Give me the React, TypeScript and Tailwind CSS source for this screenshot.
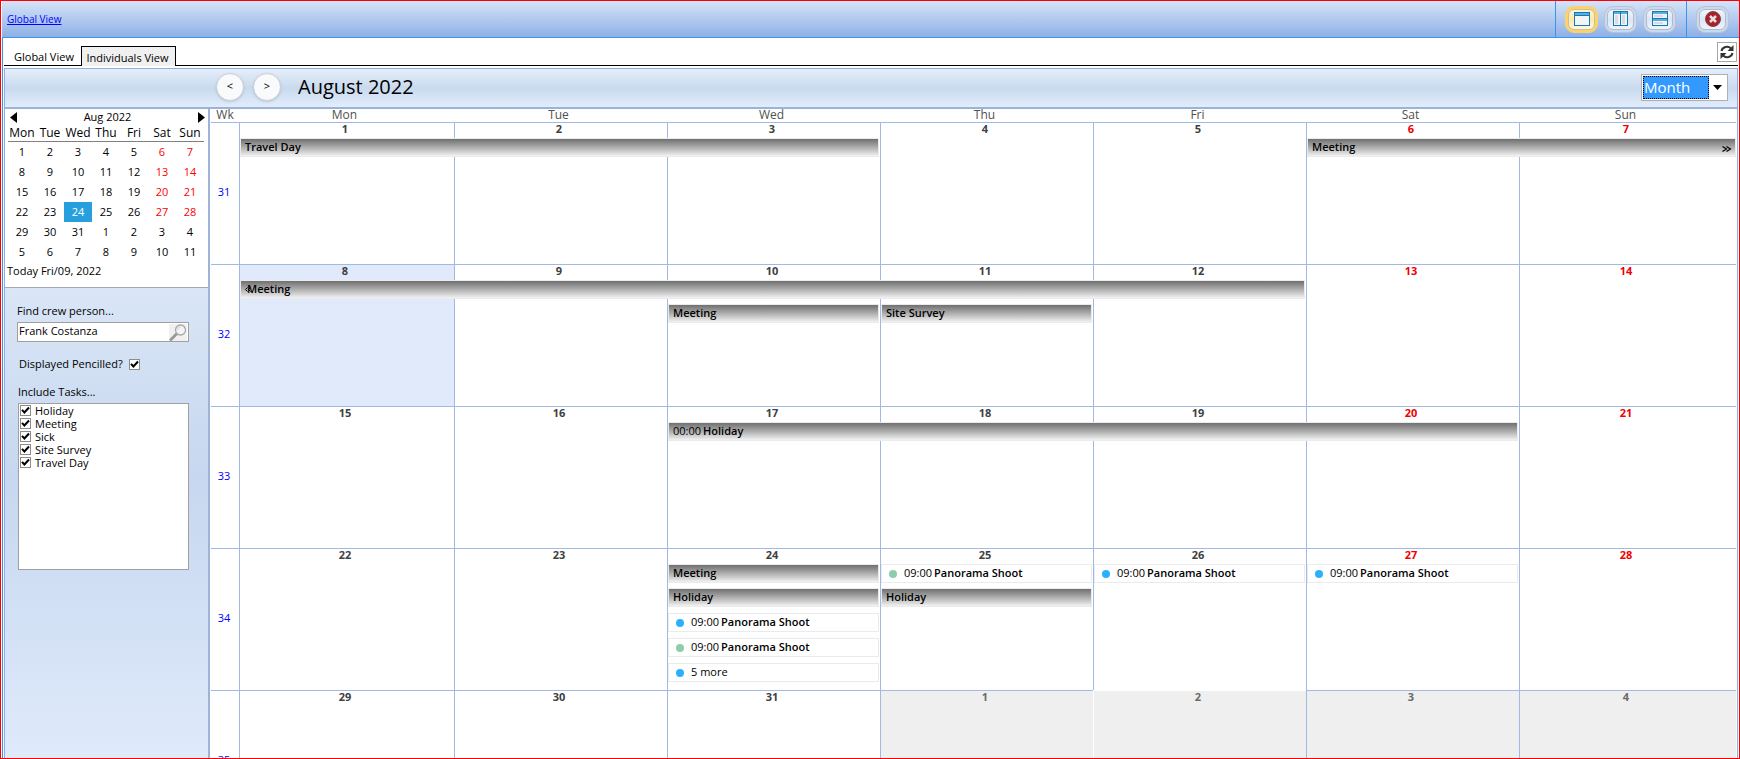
import React from "react";

type Entry = {
  col: number;
  span?: number;
  row: number;
  kind: "bar" | "box";
  dot?: "blue" | "green";
  time?: string;
  title: string;
  plain?: boolean;
  from?: boolean;
  more?: boolean;
};

type Week = { no: number; first: number; entries: Entry[] };

const DAYS = ["Mon", "Tue", "Wed", "Thu", "Fri", "Sat", "Sun"];
const TASKS = ["Holiday", "Meeting", "Sick", "Site Survey", "Travel Day"];

const WEEKS: Week[] = [
  {
    no: 31,
    first: 1,
    entries: [
      { col: 0, span: 3, row: 0, kind: "bar", title: "Travel Day" },
      { col: 5, span: 2, row: 0, kind: "bar", title: "Meeting", more: true },
    ],
  },
  {
    no: 32,
    first: 8,
    entries: [
      { col: 0, span: 5, row: 0, kind: "bar", title: "Meeting", from: true },
      { col: 2, row: 1, kind: "bar", title: "Meeting" },
      { col: 3, row: 1, kind: "bar", title: "Site Survey" },
    ],
  },
  {
    no: 33,
    first: 15,
    entries: [{ col: 2, span: 4, row: 0, kind: "bar", time: "00:00", title: "Holiday" }],
  },
  {
    no: 34,
    first: 22,
    entries: [
      { col: 2, row: 0, kind: "bar", title: "Meeting" },
      { col: 3, row: 0, kind: "box", dot: "green", time: "09:00", title: "Panorama Shoot" },
      { col: 4, row: 0, kind: "box", dot: "blue", time: "09:00", title: "Panorama Shoot" },
      { col: 5, row: 0, kind: "box", dot: "blue", time: "09:00", title: "Panorama Shoot" },
      { col: 2, row: 1, kind: "bar", title: "Holiday" },
      { col: 3, row: 1, kind: "bar", title: "Holiday" },
      { col: 2, row: 2, kind: "box", dot: "blue", time: "09:00", title: "Panorama Shoot" },
      { col: 2, row: 3, kind: "box", dot: "green", time: "09:00", title: "Panorama Shoot" },
      { col: 2, row: 4, kind: "box", dot: "blue", title: "5 more", plain: true },
    ],
  },
  { no: 35, first: 29, entries: [] },
];

const COL_START = ["col-start-1", "col-start-2", "col-start-3", "col-start-4", "col-start-5", "col-start-6", "col-start-7"];
const COL_SPAN = ["", "col-span-1", "col-span-2", "col-span-3", "col-span-4", "col-span-5"];
const ROW_START = ["row-start-2", "row-start-3", "row-start-4", "row-start-5", "row-start-6"];
const DAY_COLUMNS = "grid grid-cols-[215fr_213fr_213fr_213fr_213fr_213fr_217fr]";

function dayOf(n: number) {
  return n > 31 ? n - 31 : n;
}

function EntryView({ e }: { e: Entry }) {
  const place = `${COL_START[e.col]} ${COL_SPAN[e.span ?? 1]} ${ROW_START[e.row]}`;
  const look =
    e.kind === "bar"
      ? "bg-linear-to-b from-[#707070] to-[#f2f2f2] px-1"
      : "bg-white px-[7px]";
  return (
    <div
      className={`${place} ${look} ${e.more ? "" : "mr-px"} ml-px flex h-[19px] items-center overflow-hidden border border-[#ebebee] text-[11px] leading-[15px] whitespace-nowrap text-black`}
    >
      {e.dot && (
        <span
          className={`mr-[7px] size-2 shrink-0 rounded-full ${e.dot === "blue" ? "bg-[#2bb1fb]" : "bg-[#8fcdaa]"}`}
        />
      )}
      {e.from && (
        <svg width="6" height="5" viewBox="0 0 6 5" className="-mr-1 shrink-0" fill="none" stroke="#000">
          <path d="M2.500 0.500l-2 2 2 2M5.500 0.500l-2 2 2 2" />
        </svg>
      )}
      {e.time && <span className="mr-[2px] pb-0.5">{e.time}</span>}
      <span className={`pb-0.5 ${e.plain ? "" : "font-semibold"}`}>{e.title}</span>
      {e.more && (
        <svg width="10" height="6" viewBox="0 0 10 6" className="mt-0.5 -mr-px ml-auto" fill="none" stroke="#000" strokeWidth="1.200">
          <path d="M0.500 0.500l4 2.500-4 2.500M4.500 0.500l4 2.500-4 2.500" />
        </svg>
      )}
    </div>
  );
}

function WeekRow({ week }: { week: Week }) {
  return (
    <div className="flex h-[142px] shrink-0">
      <div className="flex w-7 shrink-0 items-center justify-center border-t border-[#a0bae3] pr-0.5 pb-0.5 text-[11px] text-[#0000ff]">
        {week.no}
      </div>
      <div className={`${DAY_COLUMNS} flex-1 grid-rows-[16px_24px_25px_25px_25px_1fr]`}>
        {DAYS.map((d, i) => {
          const n = week.first + i;
          const outside = n > 31;
          const line = n === 33 ? "border-white" : "border-[#a0bae3]";
          const fill = outside ? "bg-[#efefef]" : n === 8 ? "bg-[#e1eafa]" : "";
          const ink = outside ? "text-[#6a6a6a]" : i > 4 ? "text-[#f00000]" : "text-[#404040]";
          return (
            <div
              key={d}
              className={`${COL_START[i]} row-span-6 row-start-1 border-t border-l pr-1 text-center text-[11px] leading-[11px] font-bold ${line} ${fill} ${ink}`}
            >
              {dayOf(n)}
            </div>
          );
        })}
        {week.entries.map((e, i) => (
          <EntryView key={i} e={e} />
        ))}
      </div>
    </div>
  );
}

function LayoutButton({ label, active, children }: { label: string; active?: boolean; children: React.ReactNode }) {
  return (
    <button
      aria-label={label}
      className={`flex h-[27px] w-[33px] rounded-[9px] border p-0.5 ${
        active ? "border-[#fbd26b] bg-[#fbd26b]" : "border-[#b9c2d2] bg-[#c8daf1]"
      }`}
    >
      <span
        className={`flex size-full items-center justify-center rounded-[6px] border bg-linear-to-b ${
          active
            ? "border-[#c9c0a0] from-[#fbf3d8] via-[#faeaa8] to-[#fdf8e6]"
            : "border-[#b4bac6] from-[#f2f6fc] via-[#dbe6f5] to-[#eef4fc]"
        }`}
      >
        {children}
      </span>
    </button>
  );
}

function PaneIcon({ kind }: { kind: "single" | "columns" | "rows" }) {
  return (
    <svg width="16" height="16" viewBox="0 0 16 16" className="shrink-0" shapeRendering="crispEdges">
      {kind === "single" && (
        <>
          <rect x="0.5" y="1.5" width="15" height="13" fill="#f1f5fa" stroke="#1878b4" />
          <rect x="1" y="2" width="14" height="3" fill="#58aede" />
          <rect x="1" y="4" width="14" height="1" fill="#1878b4" />
        </>
      )}
      {kind === "columns" && (
        <>
          <rect x="0.5" y="0.5" width="7" height="14" fill="#f1f5fa" stroke="#1878b4" />
          <rect x="7.5" y="0.5" width="7" height="14" fill="#f1f5fa" stroke="#1878b4" />
          <rect x="1" y="1" width="6" height="2" fill="#58aede" />
          <rect x="8" y="1" width="6" height="2" fill="#58aede" />
          <rect x="2" y="4" width="3" height="9" fill="#d9dde2" />
          <rect x="9" y="4" width="3" height="9" fill="#d9dde2" />
        </>
      )}
      {kind === "rows" && (
        <>
          <rect x="0.5" y="0.5" width="15" height="7" fill="#f1f5fa" stroke="#1878b4" />
          <rect x="0.5" y="7.5" width="15" height="7" fill="#f1f5fa" stroke="#1878b4" />
          <rect x="1" y="1" width="14" height="2" fill="#58aede" />
          <rect x="1" y="8" width="14" height="2" fill="#58aede" />
          <rect x="2" y="4" width="9" height="2" fill="#d9dde2" />
          <rect x="2" y="11" width="9" height="2" fill="#d9dde2" />
        </>
      )}
    </svg>
  );
}

function Tick({ id, label }: { id: string; label: string }) {
  return (
    <span className="grid size-[11px] shrink-0">
      <input
        id={id}
        type="checkbox"
        defaultChecked
        aria-label={label}
        className="peer col-start-1 row-start-1 size-[11px] appearance-none border border-[#8c8c8c] bg-white"
      />
      <svg
        viewBox="0 0 11 11"
        className="pointer-events-none invisible col-start-1 row-start-1 size-[11px] peer-checked:visible"
      >
        <path d="M2 4.800 4.400 7.500 9 2.500" fill="none" stroke="#000" strokeWidth="2" />
      </svg>
    </span>
  );
}

function MiniCalendar() {
  return (
    <div className="h-[179px] shrink-0 border-b border-[#a5a8b0] bg-white">
      <div className="flex h-4 items-center justify-between pr-[3px] pl-[5px] text-[11px] leading-4">
        <button aria-label="Previous month">
          <svg width="7" height="11" viewBox="0 0 7 11"><path d="M7 0v11L0 5.500z" /></svg>
        </button>
        <span>Aug 2022</span>
        <button aria-label="Next month">
          <svg width="7" height="11" viewBox="0 0 7 11"><path d="M0 0v11l7-5.500z" /></svg>
        </button>
      </div>
      <table className="ml-[3px] w-[196px] table-fixed border-collapse text-center text-[11px]">
        <thead className="text-[12px]">
          <tr className="h-4">
            {DAYS.map((d) => (
              <th key={d} className="p-0 leading-4 font-normal">{d}</th>
            ))}
          </tr>
        </thead>
        <tbody className="border-t border-[#808080]">
          {[1, 8, 15, 22, 29, 36].map((first) => (
            <tr key={first} className="h-5">
              {DAYS.map((d, i) => {
                const n = first + i;
                const tone = n === 24 ? "bg-[#269fdc] text-white" : i > 4 && n < 32 ? "text-[#ff0000]" : "";
                return (
                  <td key={d} className={`p-0 leading-5 ${tone}`}>{dayOf(n)}</td>
                );
              })}
            </tr>
          ))}
        </tbody>
      </table>
      <p className="px-[2px] text-[11px] leading-[18px]">Today Fri/09, 2022</p>
    </div>
  );
}

function Sidebar() {
  return (
    <aside className="flex w-[205px] shrink-0 flex-col border-r-2 border-[#9fb3d8] text-[11px]">
      <MiniCalendar />
      <div className="flex flex-1 flex-col bg-linear-to-b from-[#dae6f6] via-[#c6d7ef] via-40% to-[#dfeafb] px-3 pt-[15px]">
        <label htmlFor="crew" className="leading-4">Find crew person...</label>
        <div className="mt-[3px] flex h-5 w-[172px] items-center border border-[#a0a0a0] bg-white">
          <input id="crew" defaultValue="Frank Costanza" className="min-w-0 flex-1 px-[1px] pb-0.5 text-[11px] leading-4 outline-none" />
          <svg width="18" height="17" viewBox="0 0 18 17" className="mr-px bg-[#f0f0f0]">
            <path d="M2 15.500 7.500 10" stroke="#9a9a9a" strokeWidth="3" strokeLinecap="round" />
            <circle cx="11.500" cy="6" r="5" fill="#f4f4f4" stroke="#a8a8a8" strokeWidth="1.300" />
            <path d="M8.500 6a3 3 0 0 1 3-3" fill="none" stroke="#d0d0d0" />
          </svg>
        </div>
        <div className="mt-[14px] flex items-center gap-[6px] pl-[2px]">
          <label htmlFor="pencilled" className="leading-4">Displayed Pencilled?</label>
          <Tick id="pencilled" label="Displayed Pencilled?" />
        </div>
        <p className="mt-3 pl-px leading-4">Include Tasks...</p>
        <div className="mt-[3px] ml-px h-[167px] w-[171px] border border-[#a0a0a0] bg-white pl-px">
          {TASKS.map((t) => (
            <div key={t} className="flex h-[13px] items-center gap-1">
              <Tick id={t} label={t} />
              <label htmlFor={t} className="leading-[13px]">{t}</label>
            </div>
          ))}
        </div>
      </div>
    </aside>
  );
}

export default function App() {
  return (
    <div className="flex h-screen flex-col overflow-hidden border border-[#ff0000] bg-white pl-px font-['Open_Sans','Noto_Sans',sans-serif] text-black">
      <header className="flex h-[37px] shrink-0 items-stretch border-b border-[#3c94ea] bg-linear-to-b from-[#d6e4f8] to-[#8eb0e6]">
        <a href="#global" className="self-center pl-[5px] text-[10px] text-[#0000ff] underline">Global View</a>
        <div className="ml-auto flex items-center gap-[6px] border-l border-[#3c94ea] pr-[10px] pl-[9px]">
          <LayoutButton label="Single pane" active><PaneIcon kind="single" /></LayoutButton>
          <LayoutButton label="Side by side"><PaneIcon kind="columns" /></LayoutButton>
          <LayoutButton label="Stacked"><PaneIcon kind="rows" /></LayoutButton>
        </div>
        <div className="flex items-center border-l border-[#3c94ea] pr-[10px] pl-[9px]">
          <LayoutButton label="Close">
            <svg width="16" height="16" viewBox="0 0 16 16" className="shrink-0">
              <circle cx="8" cy="8" r="7.500" fill="#a82028" stroke="#7a4a50" />
              <path d="M5 5l6 6M11 5l-6 6" stroke="#e6e0e2" strokeWidth="2.500" />
            </svg>
          </LayoutButton>
        </div>
      </header>

      <div className="flex min-h-0 flex-1 flex-col border-l border-[#3c94ea] pr-px pl-px">
        <nav className="flex h-7 shrink-0 items-end border-b border-black pl-[9px] text-[11px]">
          <button className="h-[19px] w-[68px] pt-0.5 text-left leading-[17px] whitespace-nowrap">
            <span className="pl-px">Global View</span>
          </button>
          <button className="-mb-px h-5 w-[95px] border border-b-0 border-black bg-[#f0f0f0] pt-0.5 pr-0.5 leading-[17px] whitespace-nowrap">
            Individuals View
          </button>
          <button aria-label="Refresh" className="mr-px mb-[3px] ml-auto flex size-5 items-center justify-center border border-[#a8a8a8] bg-white">
            <svg width="16" height="16" viewBox="0 0 16 16" className="shrink-0" fill="none" stroke="#333" strokeWidth="2">
              <path d="M2.500 7A5.500 5 0 0 1 12 4.500" />
              <path d="M13.500 9A5.500 5 0 0 1 4 11.500" />
              <path d="M14.500 1v6h-6zM1.500 15V9h6z" fill="#333" stroke="none" />
            </svg>
          </button>
        </nav>

        <div className="mt-[2px] flex min-h-0 flex-1 flex-col border-x border-t border-[#8eb0e0]">
          <div className="flex h-10 shrink-0 items-center border-b-2 border-[#9db2d8] bg-linear-to-b from-[#e6eefa] via-[#c9daee] to-[#e2edfc] pr-[9px] pb-0.5 pl-[211px]">
            <button aria-label="Previous" className="size-7 rounded-full border border-[#c9d0d8] bg-[#f8fafc] pb-0.5 text-[11px] shadow-sm">&lt;</button>
            <button aria-label="Next" className="ml-[9px] size-7 rounded-full border border-[#c9d0d8] bg-[#f8fafc] pb-0.5 text-[11px] shadow-sm">&gt;</button>
            <h1 className="ml-[17px] text-[20px] leading-7">August 2022</h1>
            <div className="ml-auto flex h-[27px] w-[87px] items-center border border-[#b0b0b0] bg-white p-px">
              <select aria-label="View" className="h-full w-[66px] appearance-none border border-dotted border-black bg-[#3399ff] text-[15px] leading-5 text-white outline-none">
                <option>Month</option>
              </select>
              <svg width="9" height="5" viewBox="0 0 9 5" className="mx-auto"><path d="M0 0h9L4.500 5z" /></svg>
            </div>
          </div>

          <div className="flex min-h-0 flex-1">
            <Sidebar />
            <main className="flex min-w-0 flex-1 flex-col pr-px pl-px">
              <div className="flex h-[13px] shrink-0 text-[12px] leading-[11px] text-[#505050]">
                <div className="w-7 shrink-0 text-center">Wk</div>
                <div className={`${DAY_COLUMNS} flex-1`}>
                  {DAYS.map((d) => (
                    <div key={d} className="pr-1 text-center">{d}</div>
                  ))}
                </div>
              </div>
              <div className="flex min-h-0 flex-1 flex-col overflow-hidden">
                {WEEKS.map((w) => (
                  <WeekRow key={w.no} week={w} />
                ))}
              </div>
            </main>
          </div>
        </div>
      </div>
    </div>
  );
}
